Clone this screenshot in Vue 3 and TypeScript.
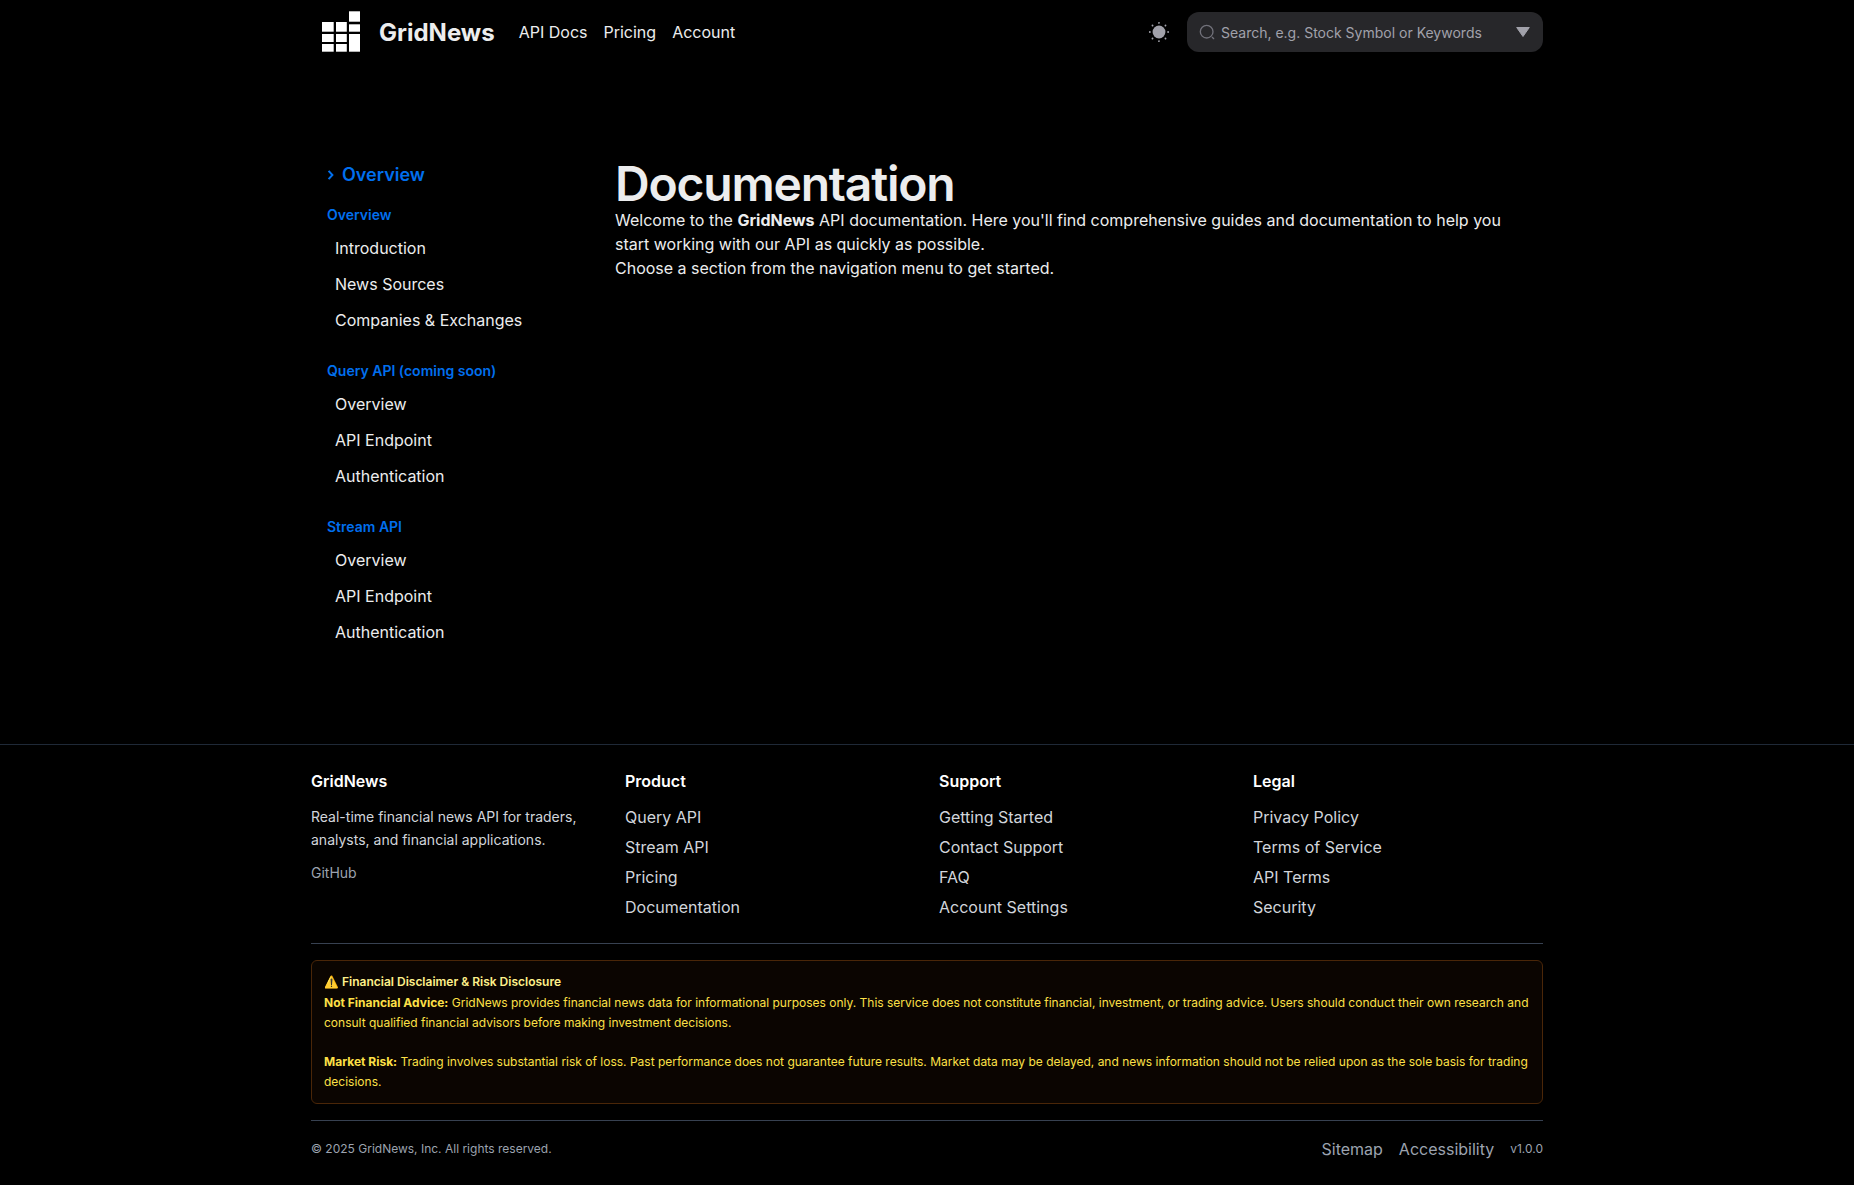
<script setup lang="ts">
import { ref } from 'vue'

interface Section {
  title: string
  items: string[]
}

const query = ref('')

const navLinks: string[] = ['API Docs', 'Pricing', 'Account']

const docSections: Section[] = [
  { title: 'Overview', items: ['Introduction', 'News Sources', 'Companies & Exchanges'] },
  { title: 'Query API (coming soon)', items: ['Overview', 'API Endpoint', 'Authentication'] },
  { title: 'Stream API', items: ['Overview', 'API Endpoint', 'Authentication'] },
]

const footerSections: Section[] = [
  { title: 'Product', items: ['Query API', 'Stream API', 'Pricing', 'Documentation'] },
  { title: 'Support', items: ['Getting Started', 'Contact Support', 'FAQ', 'Account Settings'] },
  { title: 'Legal', items: ['Privacy Policy', 'Terms of Service', 'API Terms', 'Security'] },
]
</script>

<template>
  <div class="page">
    <header class="container navbar">
      <a class="brand" href="#">
        <svg class="logo" viewBox="0 0 60 56" aria-hidden="true">
          <g fill="#fff">
            <rect x="11" y="18" width="11.7" height="9.7" />
            <rect x="11" y="30" width="11.7" height="8" />
            <rect x="11" y="40" width="11.7" height="7.7" />
            <rect x="25" y="18" width="10.8" height="9.7" />
            <rect x="25" y="30" width="10.8" height="8" />
            <rect x="25" y="40" width="10.8" height="7.7" />
            <rect x="38" y="7.3" width="11" height="10.4" />
            <rect x="38" y="20.3" width="11" height="7.4" />
            <rect x="38" y="30" width="11" height="17.7" />
          </g>
        </svg>
        <span>GridNews</span>
      </a>
      <nav class="links" aria-label="Main">
        <a v-for="link in navLinks" :key="link" href="#">{{ link }}</a>
      </nav>
      <div class="tools">
        <button class="theme" type="button" aria-label="Switch to light mode">
          <svg width="22" height="22" viewBox="0 0 24 24" fill="currentColor" aria-hidden="true">
            <path d="M19 12a7 7 0 1 1-7-7 7 7 0 0 1 7 7z" />
            <path d="M12 22.96a.969.969 0 0 1-1-.96v-.08a1 1 0 0 1 2 0 1.038 1.038 0 0 1-1 1.04zm7.14-2.82a1.024 1.024 0 0 1-.71-.29l-.13-.13a1 1 0 0 1 1.41-1.41l.13.13a1 1 0 0 1 0 1.41.984.984 0 0 1-.7.29zm-14.28 0a1.024 1.024 0 0 1-.71-.29 1 1 0 0 1 0-1.41l.13-.13a1 1 0 0 1 1.41 1.41l-.13.13a1 1 0 0 1-.7.29zM22 13h-.08a1 1 0 0 1 0-2 1.038 1.038 0 0 1 1.04 1 .969.969 0 0 1-.96 1zM2.08 13H2a1 1 0 0 1 0-2 1.038 1.038 0 0 1 1.04 1 .969.969 0 0 1-.96 1zm16.93-7.01a1.024 1.024 0 0 1-.71-.29 1 1 0 0 1 0-1.41l.13-.13a1 1 0 0 1 1.41 1.41l-.13.13a.984.984 0 0 1-.7.29zm-14.02 0a1.024 1.024 0 0 1-.71-.29l-.13-.14a1 1 0 0 1 1.41-1.41l.13.13a1 1 0 0 1 0 1.41.97.97 0 0 1-.7.3zM12 3.04a.969.969 0 0 1-1-.96V2a1 1 0 0 1 2 0 1.038 1.038 0 0 1-1 1.04z" />
          </svg>
        </button>
        <div class="search">
          <svg width="16" height="16" viewBox="0 0 24 24" fill="none" stroke="currentColor" stroke-width="2" stroke-linecap="round" aria-hidden="true">
            <circle cx="11.5" cy="11.5" r="9.5" />
            <path d="M22 22l-2-2" />
          </svg>
          <input v-model="query" type="search" aria-label="Search" placeholder="Search, e.g. Stock Symbol or Keywords" />
          <button class="filter" type="button" aria-label="Search options">
            <svg width="14" height="10" viewBox="0 0 14 10" fill="currentColor" stroke="currentColor" stroke-linejoin="round" aria-hidden="true">
              <path d="M.7.5h12.6L7 9.5z" />
            </svg>
          </button>
        </div>
      </div>
    </header>

    <main class="container docs">
      <aside class="sidebar">
        <a class="current" href="#">
          <svg width="7" height="10" viewBox="0 0 7 10" fill="none" stroke="currentColor" stroke-width="2" aria-hidden="true">
            <path d="M1.6 .8l3.8 4.2-3.8 4.2" />
          </svg>
          Overview
        </a>
        <section v-for="section in docSections" :key="section.title" class="group">
          <h2>{{ section.title }}</h2>
          <ul>
            <li v-for="item in section.items" :key="item"><a href="#">{{ item }}</a></li>
          </ul>
        </section>
      </aside>
      <article class="content">
        <h1>Documentation</h1>
        <p>
          Welcome to the <strong>GridNews</strong> API documentation. Here you'll find comprehensive
          guides and documentation to help you start working with our API as quickly as possible.
        </p>
        <p>Choose a section from the navigation menu to get started.</p>
      </article>
    </main>

    <footer class="footer">
      <div class="container">
        <div class="columns">
          <section class="about">
            <h3>GridNews</h3>
            <p>Real-time financial news API for traders, analysts, and financial applications.</p>
            <a href="#">GitHub</a>
          </section>
          <section v-for="section in footerSections" :key="section.title">
            <h3>{{ section.title }}</h3>
            <ul>
              <li v-for="item in section.items" :key="item"><a href="#">{{ item }}</a></li>
            </ul>
          </section>
        </div>
        <div class="notice-wrap">
          <section class="notice">
            <h4>⚠️ Financial Disclaimer &amp; Risk Disclosure</h4>
            <p>
              <strong>Not Financial Advice:</strong> GridNews provides financial news data for
              informational purposes only. This service does not constitute financial, investment,
              or trading advice. Users should conduct their own research and consult qualified
              financial advisors before making investment decisions.
            </p>
            <p>
              <strong>Market Risk:</strong> Trading involves substantial risk of loss. Past
              performance does not guarantee future results. Market data may be delayed, and news
              information should not be relied upon as the sole basis for trading decisions.
            </p>
          </section>
        </div>
        <div class="legal">
          <span>© 2025 GridNews, Inc. All rights reserved.</span>
          <div class="legal-links">
            <a href="#">Sitemap</a>
            <a href="#">Accessibility</a>
            <span>v1.0.0</span>
          </div>
        </div>
      </div>
    </footer>
  </div>
</template>

<style>
body {
  margin: 0;
  background: #000;
}
</style>

<style scoped>
.page {
  min-height: 100vh;
  background: #000;
  color: #ecedee;
  font-family: Inter, 'Liberation Sans', sans-serif;
  font-size: 16px;
  line-height: 24px;
}
h1, h2, h3, h4, p, ul {
  margin: 0;
  padding: 0;
}
ul {
  list-style: none;
}
a {
  color: inherit;
  text-decoration: none;
}
button {
  display: flex;
  align-items: center;
  justify-content: center;
  padding: 0;
  border: 0;
  background: none;
  color: #a1a1aa;
  cursor: pointer;
}
.container {
  box-sizing: border-box;
  max-width: 1280px;
  margin: 0 auto;
  padding: 0 24px;
}

.navbar {
  display: flex;
  align-items: center;
  gap: 24px;
  height: 64px;
}
.brand {
  display: flex;
  align-items: center;
  gap: 8px;
  font-size: 24px;
  font-weight: 700;
  line-height: 33px;
}
.logo {
  width: 60px;
  height: 56px;
}
.links {
  display: flex;
  gap: 16px;
}
.tools {
  display: flex;
  align-items: center;
  gap: 16px;
  margin-left: auto;
}
.theme {
  width: 24px;
  height: 24px;
}
.search {
  box-sizing: border-box;
  display: flex;
  align-items: center;
  gap: 6px;
  width: 356px;
  height: 40px;
  padding: 0 13px 0 12px;
  border-radius: 12px;
  background: #27272a;
  color: #71717a;
}
.search input {
  flex: 1;
  min-width: 0;
  padding: 0;
  border: 0;
  outline: 0;
  background: none;
  color: #ecedee;
  font: inherit;
  font-size: 14px;
  line-height: 21px;
}
.search input::placeholder {
  color: #a1a1aa;
  opacity: 1;
}

.docs {
  display: flex;
  gap: 32px;
  padding-top: 96px;
  padding-bottom: 94px;
}
.sidebar {
  box-sizing: border-box;
  flex: none;
  width: 272px;
  padding: 0 16px;
}
.current {
  display: flex;
  align-items: center;
  gap: 8px;
  height: 30px;
  margin-bottom: 15px;
  color: #006fee;
  font-size: 18px;
  font-weight: 600;
}
.group + .group {
  margin-top: 23px;
}
.group h2 {
  color: #006fee;
  font-size: 14px;
  font-weight: 600;
  line-height: 20px;
}
.group ul {
  padding-top: 5px;
}
.group li {
  padding: 6px 8px;
}
.content {
  flex: 1;
  padding-right: 16px;
}
.content h1 {
  font-size: 48px;
  font-weight: 600;
  line-height: 48px;
  letter-spacing: -0.025em;
}

.footer {
  border-top: 1px solid #1f2937;
}
.columns {
  display: grid;
  grid-template-columns: repeat(4, 1fr);
  gap: 24px;
  padding: 24px 0;
  border-bottom: 1px solid #374151;
}
.columns h3 {
  margin-bottom: 12px;
  color: #fff;
  font-size: 16px;
  font-weight: 600;
}
.columns ul {
  display: grid;
  gap: 6px;
  color: #d1d5db;
}
.about {
  font-size: 14px;
}
.about p {
  margin-bottom: 10px;
  color: #d1d5db;
  line-height: 23px;
}
.about a {
  color: #9ca3af;
}
.notice-wrap {
  padding: 16px 0;
  border-bottom: 1px solid #374151;
}
.notice {
  padding: 13px 12px 11px;
  border: 1px solid #4a2608;
  border-radius: 6px;
  background: #0b0501;
  color: #fde047;
  font-size: 12px;
  line-height: 20px;
}
.notice h4 {
  margin-bottom: 3px;
  color: #fef08a;
  font-size: 12px;
  font-weight: 600;
  line-height: 16px;
}
.notice p + p {
  margin-top: 19px;
}
.legal {
  display: flex;
  align-items: center;
  justify-content: space-between;
  padding: 16px 0 24px;
  color: #9ca3af;
  font-size: 12px;
}
.legal-links {
  display: flex;
  align-items: center;
  gap: 16px;
}
.legal-links a {
  font-size: 16px;
}
</style>
